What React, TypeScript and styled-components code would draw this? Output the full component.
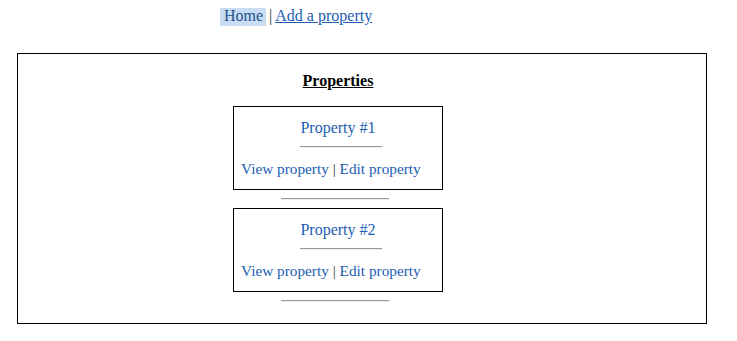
import React from 'react'
import styled, { createGlobalStyle } from 'styled-components'

const GlobalStyle = createGlobalStyle`
  body {
    margin: 8px;
    background: #ffffff;
    font-family: "Liberation Serif", "Times New Roman", serif;
    font-size: 16px;
    color: #000000;
  }
`

const Nav = styled.nav`
  display: flex;
  align-items: center;
  margin-top: -1px;
  padding-left: 212px;
  line-height: 18px;
  height: 18px;
`

const NavLink = styled.a<{ $active?: boolean }>`
  color: ${(p) => (p.$active ? '#23508f' : '#1b5db3')};
  text-decoration: ${(p) => (p.$active ? 'none' : 'underline')};
  background: ${(p) => (p.$active ? '#c8dcf3' : 'transparent')};
  padding: ${(p) => (p.$active ? '1px 3px 1px 4px' : '0')};
`

const Sep = styled.span`
  margin: 0 3px;
  color: #333;
`

const Panel = styled.section`
  margin: 28px 22px 0 9px;
  border: 1px solid #000;
  padding: 18px 48px 13px 0;
  display: flex;
  flex-direction: column;
  align-items: center;
`

const Title = styled.h2`
  margin: 0 0 16px;
  font-size: 16px;
  line-height: 18px;
  font-weight: bold;
  text-decoration: underline;
`

const Card = styled.div`
  width: 194px;
  border: 1px solid #000;
  padding: 12px 7px 11px;
  display: flex;
  flex-direction: column;
  align-items: center;
  line-height: 18px;
`

const CardTitle = styled.a`
  color: #1b5db3;
  text-decoration: none;
`

// $shift nudges the rule off-centre (positive = right)
const Rule = styled.hr<{ $width: number; $top: number; $bottom: number; $shift: number }>`
  width: ${(p) => p.$width}px;
  height: 0;
  margin: ${(p) => p.$top}px ${(p) => Math.max(0, -p.$shift * 2)}px
    ${(p) => p.$bottom}px ${(p) => Math.max(0, p.$shift * 2)}px;
  border: none;
  border-top: 1px solid #999;
  border-bottom: 1px solid #eeeeee;
`

const Actions = styled.div`
  align-self: stretch;
  color: #333;
  font-size: 15.3px;
`

const ActionLink = styled.a`
  color: #1b5db3;
  text-decoration: none;
`

const properties = [1, 2]

export default function App() {
  return (
    <>
      <GlobalStyle />
      <Nav>
        <NavLink $active href="#">Home</NavLink>
        <Sep>|</Sep>
        <NavLink href="#">Add a property</NavLink>
      </Nav>
      <Panel>
        <Title>Properties</Title>
        {properties.map((n) => (
          <React.Fragment key={n}>
            <Card>
              <CardTitle href="#">Property #{n}</CardTitle>
              <Rule $width={82} $top={9} $bottom={12} $shift={3} />
              <Actions>
                <ActionLink href="#">View property</ActionLink> |{' '}
                <ActionLink href="#">Edit property</ActionLink>
              </Actions>
            </Card>
            <Rule $width={108} $top={8} $bottom={8} $shift={-3} />
          </React.Fragment>
        ))}
      </Panel>
    </>
  )
}
